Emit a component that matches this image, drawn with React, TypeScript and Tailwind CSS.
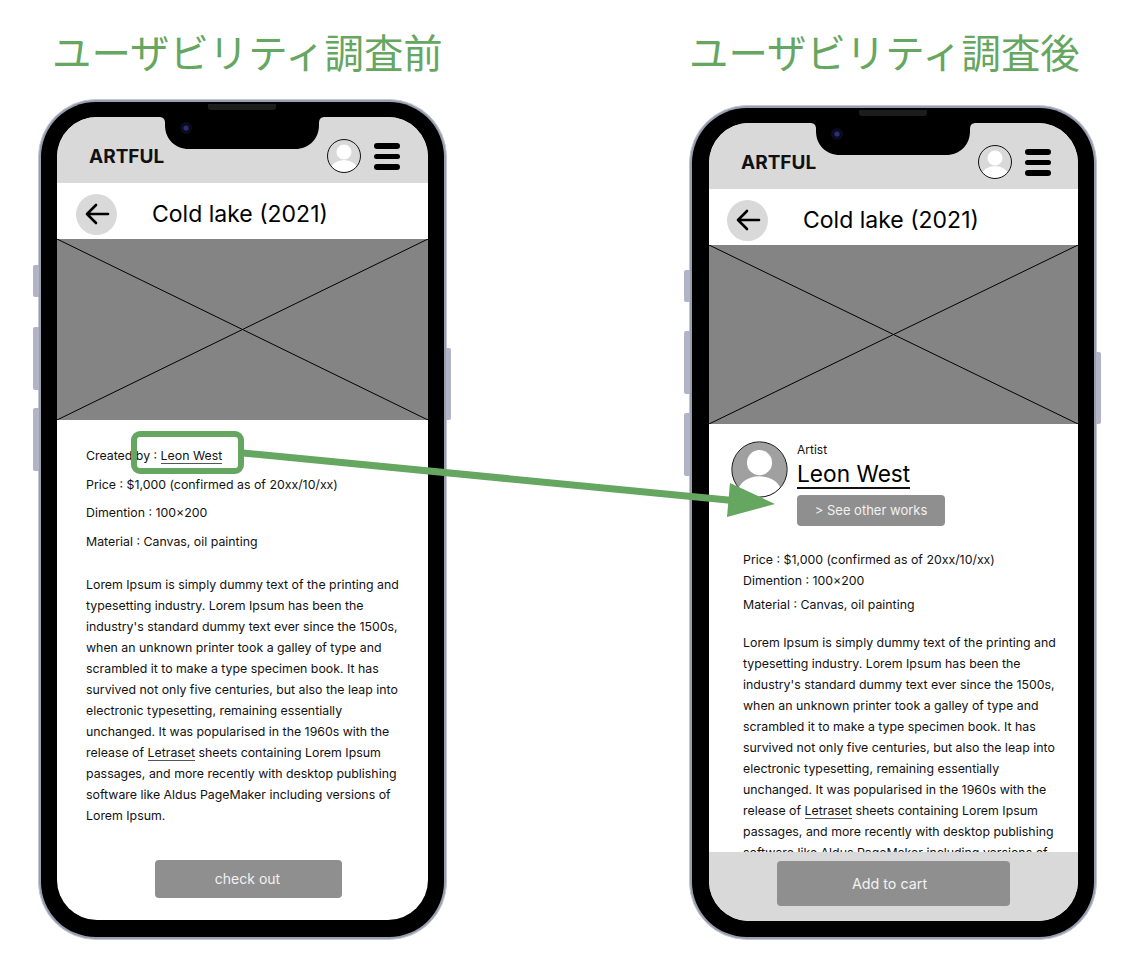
import React from "react";

const FONT = "font-['Inter','Noto_Sans',sans-serif]";

const Avatar = ({ size, bg, stroke = 1 }: { size: number; bg: string; stroke?: number }) => (
  <svg width={size} height={size} viewBox="0 0 100 100" className="block shrink-0">
    <defs>
      <clipPath id={`c${size}`}>
        <circle cx="50" cy="50" r="48" />
      </clipPath>
    </defs>
    <circle cx="50" cy="50" r="48" fill={bg} />
    <g clipPath={`url(#c${size})`} fill="#fff">
      <circle cx="50" cy="38" r="22" />
      <ellipse cx="50" cy="90" rx="38" ry="28" />
    </g>
    <circle cx="50" cy="50" r="48.5" fill="none" stroke="#111" strokeWidth={stroke * (100 / size)} />
  </svg>
);

const Menu = () => (
  <div className="flex w-[26px] flex-col gap-[5px]">
    <div className="h-[6px] rounded-full bg-black" />
    <div className="h-[5px] rounded-full bg-black" />
    <div className="h-[6px] rounded-full bg-black" />
  </div>
);

const Notch = ({ right }: { right: boolean }) => (
  <svg width="166" height="33" viewBox="0 0 166 33" className={right ? "absolute left-[101px] top-0" : "absolute left-[102px] top-0"}>
    <path d="M0 0 C4 0 6 2 6 6 V8 C6 22 16 32 30 32 H136 C150 32 160 22 160 8 V6 C160 2 162 0 166 0 Z" fill="#000" />
    <circle cx="27" cy="11" r="6" fill="#0b0b1c" />
    <circle cx="27" cy="11" r="2.6" fill="#2b2f7b" />
  </svg>
);

const Xbox = ({ h }: { h: number }) => (
  <div className="shrink-0 bg-[#848484]" style={{ height: h }}>
    <svg width="100%" height="100%" viewBox="0 0 100 100" preserveAspectRatio="none" className="block">
      <line x1="0" y1="0" x2="100" y2="100" stroke="#000" strokeWidth="1" vectorEffect="non-scaling-stroke" />
      <line x1="100" y1="0" x2="0" y2="100" stroke="#000" strokeWidth="1" vectorEffect="non-scaling-stroke" />
    </svg>
  </div>
);

const Top = ({ right }: { right: boolean }) => (
  <>
    <div className="relative h-[66px] shrink-0 bg-[#d9d9d9]">
      <Notch right={right} />
      <div className={right ? "flex h-full items-end pb-[10px] pl-[32px] pr-[27px]" : "flex h-full items-end pb-[10px] pl-[32px] pr-[28px]"}>
        <span className="mb-[4px] text-[19px] leading-[24px] font-bold text-[#111]">ARTFUL</span>
        <div className="ml-auto flex items-center gap-[13px]">
          <Avatar size={34} bg="#d9d9d9" />
          <Menu />
        </div>
      </div>
    </div>
    <div className={right ? "flex h-[56px] shrink-0 items-center bg-white pl-[18px]" : "flex h-[56px] shrink-0 items-center bg-white pl-[19px]"}>
      <div className="mt-[6px] flex h-[41px] w-[41px] items-center justify-center rounded-full bg-[#d9d9d9]">
        <svg width="26" height="24" viewBox="0 0 26 24" fill="none" stroke="#000" strokeWidth="2.6" strokeLinecap="round" strokeLinejoin="round">
          <path d="M24 12H3M12 3l-9 9 9 9" />
        </svg>
      </div>
      <span className="ml-[35px] mt-[6px] text-[23px] leading-[28px] text-black">Cold lake (2021)</span>
    </div>
  </>
);

const Paragraph = () => (
  <p className="w-[322px] text-[12.35px] leading-[21px] text-[#111]">
    Lorem Ipsum is simply dummy text of the printing and typesetting industry. Lorem Ipsum has been the
    industry's standard dummy text ever since the 1500s, when an unknown printer took a galley of type and
    scrambled it to make a type specimen book. It has survived not only five centuries, but also the leap into
    electronic typesetting, remaining essentially unchanged. It was popularised in the 1960s with the release of{" "}
    <span className="border-b border-[#555]">Letraset</span> sheets containing Lorem Ipsum passages, and
    more recently with desktop publishing software like Aldus PageMaker including versions of Lorem Ipsum.
  </p>
);

const Phone = ({
  h,
  children,
  side,
  buttons,
  right,
}: {
  h: number;
  children: React.ReactNode;
  side: number;
  buttons: number[];
  right: boolean;
}) => (
  <div className="relative rounded-[58px] border border-[#c3c6d2] bg-[#989daf] p-[2px]" style={{ height: h, width: right ? 408 : 409 }}>
    <div className="absolute left-[-6px] w-[6px] rounded-l-[2px] bg-[#b0b4c6]" style={{ top: buttons[0] - 1, height: 32 }} />
    <div className="absolute left-[-6px] w-[6px] rounded-l-[2px] bg-[#b0b4c6]" style={{ top: buttons[1] - 1, height: 63 }} />
    <div className="absolute left-[-6px] w-[6px] rounded-l-[2px] bg-[#b0b4c6]" style={{ top: buttons[2] - 1, height: 63 }} />
    <div className="absolute right-[-5px] w-[5px] rounded-r-[2px] bg-[#b0b4c6]" style={{ top: side - 1, height: 72 }} />
    <div
      className={
        right
          ? "relative h-full rounded-[55px] bg-black pl-[17px] pr-[16px] pt-[15px] pb-[16px]"
          : "relative h-full rounded-[55px] bg-black px-[16px] pt-[15px] pb-[17px]"
      }
    >
      <div className="absolute left-[167px] top-[2px] h-[6px] w-[68px] rounded-b-[3px] bg-[#1c1c1c]" />
      <div className="flex h-full flex-col overflow-hidden rounded-[40px] bg-white">{children}</div>
    </div>
  </div>
);

const Heading = ({ children, offset }: { children: React.ReactNode; offset: number }) => (
  <h1
    className="mt-[27px] h-[48px] whitespace-nowrap font-['Noto_Sans_CJK_JP',sans-serif] text-[39.4px] leading-[48px] font-normal text-[#65a660]"
    style={{ marginLeft: offset }}
  >
    {children}
  </h1>
);

export default function App() {
  return (
    <div className={`relative flex h-[962px] w-[1137px] overflow-hidden bg-white ${FONT}`}>
      <div className="ml-[38px] flex h-[940px] w-[409px] flex-col justify-between">
        <Heading offset={14}>ユーザビリティ調査前</Heading>
        <Phone h={841} side={249} buttons={[166, 228, 309]} right={false}>
          <Top right={false} />
          <Xbox h={181} />
          <div className="flex flex-1 flex-col pl-[29px] text-[12.35px] leading-[18px] text-[#111]">
            <div className="mt-[27px]">
              Created by : <span className="border-b border-[#555]">Leon West</span>
            </div>
            <div className="mt-[11px]">Price : $1,000 (confirmed as of 20xx/10/xx)</div>
            <div className="mt-[10px]">Dimention : 100×200</div>
            <div className="mt-[11px]">Material : Canvas, oil painting</div>
            <div className="mt-[23px]">
              <Paragraph />
            </div>
            <div className="ml-[69px] mt-[34px] flex h-[38px] w-[187px] items-center justify-center rounded-[4px] bg-[#8f8f8f] pr-[2px] text-[14px] text-[#f2f2f2]">
              check out
            </div>
          </div>
        </Phone>
      </div>

      <div className="ml-[242px] flex h-[940px] w-[408px] flex-col justify-between">
        <Heading offset={0}>ユーザビリティ調査後</Heading>
        <Phone h={835} side={247} buttons={[165, 226, 308]} right>
          <Top right />
          <Xbox h={179} />
          <div className="flex min-h-0 flex-1 flex-col overflow-hidden">
            <div className="flex pl-[22px] pt-[17px]">
              <Avatar size={57} bg="#a0a0a0" />
              <div className="ml-[9px] flex flex-col items-start">
                <div className="mt-[1px] text-[12px] leading-[16px] text-[#111]">Artist</div>
                <div className="mt-[3px] border-b-2 border-[#111] text-[22.7px] leading-[26px] text-black">Leon West</div>
                <div className="mt-[6px] flex h-[31px] w-[148px] items-center justify-center rounded-[4px] bg-[#8f8f8f] text-[13px] text-[#f2f2f2]">
                  &gt; See other works
                </div>
              </div>
            </div>
            <div className="pl-[34px] text-[12.35px] leading-[18px] text-[#111]">
              <div className="mt-[25px]">Price : $1,000 (confirmed as of 20xx/10/xx)</div>
              <div className="mt-[3px]">Dimention : 100×200</div>
              <div className="mt-[6px]">Material : Canvas, oil painting</div>
              <div className="mt-[18px]">
                <Paragraph />
              </div>
            </div>
          </div>
          <div className="flex h-[69px] shrink-0 justify-center bg-[#d9d9d9] pt-[9px]">
            <div className="flex h-[45px] w-[233px] items-center justify-center rounded-[4px] bg-[#8f8f8f] pr-[8px] text-[14.3px] text-[#f2f2f2]">
              Add to cart
            </div>
          </div>
        </Phone>
      </div>

      {/* annotation overlay */}
      <div className="absolute left-[131px] top-[431px] h-[43px] w-[113px] rounded-[9px] border-[6px] border-[#65a660]" />
      <svg width="1137" height="962" className="pointer-events-none absolute left-0 top-0">
        <line x1="243" y1="453" x2="738" y2="501" stroke="#65a660" strokeWidth="7" />
        <polygon points="730,483 775,504 727,517" fill="#65a660" />
      </svg>
    </div>
  );
}
